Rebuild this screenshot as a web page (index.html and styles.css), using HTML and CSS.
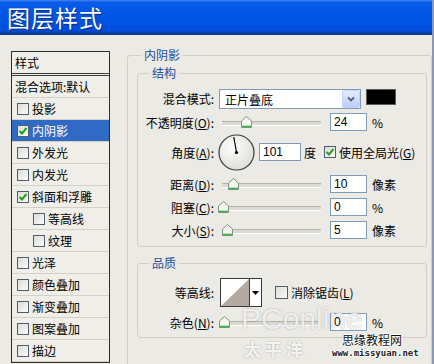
FILE: index.html
```html
<!DOCTYPE html>
<html lang="zh-CN">
<head>
    <meta charset="UTF-8">
    <meta name="viewport" content="width=device-width, initial-scale=1.0">
    <title>图层样式</title>
    <link rel="stylesheet" href="styles.css">
</head>
<body>
    <div class="window">
        <div class="titlebar">图层样式</div>

        <div class="content">
            <!-- Style list on the left -->
            <ul class="styles-list">
                <li class="head">样式</li>
                <li class="plain">混合选项:默认</li>
                <li><span class="cb"></span>投影</li>
                <li class="selected"><span class="cb"><svg viewBox="0 0 10 10"><path d="M1.5 5 L4 7.5 L8.5 2" /></svg></span>内阴影</li>
                <li><span class="cb"></span>外发光</li>
                <li><span class="cb"></span>内发光</li>
                <li><span class="cb"><svg viewBox="0 0 10 10"><path d="M1.5 5 L4 7.5 L8.5 2" /></svg></span>斜面和浮雕</li>
                <li class="sub"><span class="cb"></span>等高线</li>
                <li class="sub"><span class="cb"></span>纹理</li>
                <li><span class="cb"></span>光泽</li>
                <li><span class="cb"></span>颜色叠加</li>
                <li><span class="cb"></span>渐变叠加</li>
                <li><span class="cb"></span>图案叠加</li>
                <li><span class="cb"></span>描边</li>
            </ul>

            <!-- Settings panel -->
            <div class="panel">
                <fieldset class="group outer">
                    <legend>内阴影</legend>

                    <fieldset class="group structure">
                        <legend>结构</legend>

                        <div class="row row-blend">
                            <span class="label">混合模式:</span>
                            <div class="select">
                                <span class="select-text">正片叠底</span>
                                <span class="select-btn"><svg viewBox="0 0 10 8"><path d="M2 2.5 L5 5.5 L8 2.5" /></svg></span>
                            </div>
                            <span class="color-swatch"></span>
                        </div>

                        <div class="row row-opacity">
                            <span class="label">不透明度(<u>O</u>):</span>
                            <div class="slider"><span class="thumb" style="left: 19px"><svg viewBox="0 0 11 12"><polygon points="5.5,0.5 10.5,5 10.5,11.5 0.5,11.5 0.5,5" /><line x1="1" y1="10.5" x2="10" y2="10.5" /></svg></span></div>
                            <input class="num" type="text" value="24" readonly>
                            <span class="unit">%</span>
                        </div>

                        <div class="row row-angle">
                            <span class="label">角度(<u>A</u>):</span>
                            <svg class="dial" viewBox="0 0 37 37">
                                <defs>
                                    <radialGradient id="dialFill" cx="40%" cy="35%" r="70%">
                                        <stop offset="0" stop-color="#ffffff" />
                                        <stop offset="1" stop-color="#dcdcd6" />
                                    </radialGradient>
                                </defs>
                                <circle cx="18.5" cy="18.5" r="17.5" fill="url(#dialFill)" stroke="#3a3a3a" stroke-width="1.2" />
                                <line x1="18.5" y1="18.5" x2="15.8" y2="3" stroke="#000" stroke-width="1.2" />
                                <circle cx="18.5" cy="18.5" r="1.6" fill="#000" />
                            </svg>
                            <input class="num num-angle" type="text" value="101" readonly>
                            <span class="unit">度</span>
                            <span class="cb cb-global"><svg viewBox="0 0 10 10"><path d="M1.5 5 L4 7.5 L8.5 2" /></svg></span>
                            <span class="check-text">使用全局光(<u>G</u>)</span>
                        </div>

                        <div class="row row-slider">
                            <span class="label">距离(<u>D</u>):</span>
                            <div class="slider"><span class="thumb" style="left: 6px"><svg viewBox="0 0 11 12"><polygon points="5.5,0.5 10.5,5 10.5,11.5 0.5,11.5 0.5,5" /><line x1="1" y1="10.5" x2="10" y2="10.5" /></svg></span></div>
                            <input class="num" type="text" value="10" readonly>
                            <span class="unit">像素</span>
                        </div>

                        <div class="row row-slider">
                            <span class="label">阻塞(<u>C</u>):</span>
                            <div class="slider"><span class="thumb" style="left: -4px"><svg viewBox="0 0 11 12"><polygon points="5.5,0.5 10.5,5 10.5,11.5 0.5,11.5 0.5,5" /><line x1="1" y1="10.5" x2="10" y2="10.5" /></svg></span></div>
                            <input class="num" type="text" value="0" readonly>
                            <span class="unit">%</span>
                        </div>

                        <div class="row row-slider">
                            <span class="label">大小(<u>S</u>):</span>
                            <div class="slider"><span class="thumb" style="left: 0px"><svg viewBox="0 0 11 12"><polygon points="5.5,0.5 10.5,5 10.5,11.5 0.5,11.5 0.5,5" /><line x1="1" y1="10.5" x2="10" y2="10.5" /></svg></span></div>
                            <input class="num" type="text" value="5" readonly>
                            <span class="unit">像素</span>
                        </div>
                    </fieldset>

                    <fieldset class="group quality">
                        <legend>品质</legend>

                        <div class="row row-contour">
                            <span class="label">等高线:</span>
                            <div class="contour">
                                <svg class="contour-curve" viewBox="0 0 28 27"><rect width="28" height="27" fill="#fff" /><polygon points="0,27 28,0 28,27" fill="#b3aba0" /></svg>
                                <span class="contour-btn"><svg viewBox="0 0 7 4"><polygon points="0,0 7,0 3.5,4" /></svg></span>
                            </div>
                            <span class="cb cb-smooth"></span>
                            <span class="check-text">消除锯齿(<u>L</u>)</span>
                        </div>

                        <div class="row row-noise">
                            <span class="label">杂色(<u>N</u>):</span>
                            <div class="slider"><span class="thumb" style="left: -3px"><svg viewBox="0 0 11 12"><polygon points="5.5,0.5 10.5,5 10.5,11.5 0.5,11.5 0.5,5" /><line x1="1" y1="10.5" x2="10" y2="10.5" /></svg></span></div>
                            <input class="num" type="text" value="0" readonly>
                            <span class="unit">%</span>
                        </div>
                    </fieldset>
                </fieldset>
            </div>
        </div>

        <!-- Watermark stamped over the screenshot -->
        <div class="watermark">
            <span class="wm-pc">PConline</span>
            <span class="wm-tpy">太 平 洋</span>
            <span class="wm-site">思缘教程网</span>
            <span class="wm-url">www.missyuan.net</span>
        </div>
    </div>
</body>
</html>
```

FILE: styles.css
```css
* {
    box-sizing: border-box;
}
body {
    margin: 0;
    width: 434px;
    height: 364px;
    overflow: hidden;
    background-color: #ebeae4;
    font-family: "Noto Sans CJK SC", sans-serif;
    font-size: 12px;
    color: #000;
}
.window {
    position: relative;
    height: 364px;
    overflow: hidden;
    border-right: 2px solid #8c98b4;
}
.titlebar {
    height: 35px;
    padding: 1px 0 0 7px;
    background: linear-gradient(#4a86f0 0, #0a5ce9 2px, #0055e6 45%, #004fdc 88%, #0a3c9c 94%, #0a3c9c 100%);
    color: #fff;
    font-size: 23px;
    line-height: 33px;
    letter-spacing: 1px;
    text-shadow: 1px 1px 1px #0a2a7a;
}
.content {
    display: flex;
    align-items: flex-start;
    height: 329px;
    overflow: hidden;
    border-top: 1px solid #e4ebf6;
}

/* style list */
.styles-list {
    list-style: none;
    margin: 15px 0 0 11px;
    padding: 0;
    width: 100px;
    border: 1px solid #2e2e2e;
    background-color: #efeee9;
}
.styles-list li {
    display: flex;
    align-items: center;
    height: 22px;
    padding-left: 5px;
    border-bottom: 1px solid #d3d0c6;
    white-space: nowrap;
}
.styles-list .head {
    height: 24px;
    padding-left: 3px;
    border-bottom: 3px double #3c3c3c;
}
.styles-list .plain {
    padding-left: 3px;
}
.styles-list .sub {
    padding-left: 21px;
}
.styles-list .selected {
    background-color: #316ac5;
    color: #fff;
}
.cb {
    display: inline-flex;
    flex: none;
    width: 12px;
    height: 12px;
    margin-right: 3px;
    border: 1px solid #4e5e70;
    background: linear-gradient(135deg, #dcdcd4, #fbfbf9);
}
.cb svg {
    width: 10px;
    height: 10px;
}
.cb path {
    fill: none;
    stroke: #21a121;
    stroke-width: 2;
}

/* right panel */
.panel {
    margin: 12px 0 0 17px;
}
.group {
    margin: 0;
    border: 1px solid #d0cfc2;
    border-radius: 3px;
    min-width: 0;
}
.group legend {
    padding: 0 3px;
    margin-left: 4px;
    color: #1d4f9e;
    font-size: 12px;
    line-height: 14px;
}
.outer {
    width: 305px;
    height: 330px;
    padding: 0 0 0 9px;
}
.structure {
    width: 290px;
    margin-top: 4px;
    padding: 0 0 7px 0;
}
.quality {
    width: 290px;
    margin-top: 9px;
    padding: 0 0 6px 0;
}
.structure legend,
.quality legend {
    margin-left: 11px;
}
.row {
    display: flex;
    align-items: center;
    height: 18px;
    white-space: nowrap;
}
.label {
    flex: none;
    width: 76px;
    margin-right: 5px;
    text-align: right;
}
u {
    text-decoration: underline;
    text-underline-offset: 1px;
}
.row-blend {
    height: 20px;
    margin-top: 9px;
    align-items: flex-start;
}
.row-blend .label {
    line-height: 20px;
}
.row-opacity {
    margin-top: 4px;
}
.row-angle {
    height: 36px;
    margin-top: 3px;
}
.row-slider {
    margin-top: 5px;
}
.row-contour {
    height: 29px;
    margin-top: 8px;
}
.row-noise {
    margin-top: 6px;
}

/* blend mode select */
.select {
    display: flex;
    align-items: center;
    width: 142px;
    height: 20px;
    border: 1px solid #7f9db9;
    background-color: #fff;
}
.select-text {
    padding-left: 5px;
}
.select-btn {
    display: flex;
    align-items: center;
    justify-content: center;
    width: 18px;
    height: 18px;
    margin-left: auto;
    border: 1px solid #c3d3fd;
    border-radius: 2px;
    background: linear-gradient(#e6eefc, #b9cdf4);
}
.select-btn svg {
    width: 10px;
    height: 8px;
}
.select-btn path {
    fill: none;
    stroke: #4d6185;
    stroke-width: 1.8;
}
.color-swatch {
    width: 30px;
    height: 16px;
    margin-left: 5px;
    border: 1px solid #5a5a5a;
    background-color: #000;
}

/* sliders */
.slider {
    position: relative;
    flex: none;
    width: 99px;
    height: 18px;
    margin-left: 3px;
}
.slider::before {
    content: "";
    position: absolute;
    left: 0;
    right: 0;
    top: 8px;
    height: 3px;
    border-top: 1px solid #b4b3aa;
    border-bottom: 1px solid #fff;
    background-color: #dcdbd3;
}
.thumb {
    position: absolute;
    top: 3px;
    width: 11px;
    height: 12px;
}
.thumb svg {
    display: block;
    width: 11px;
    height: 12px;
}
.thumb polygon {
    fill: #f6f6f2;
    stroke: #7d947d;
    stroke-width: 1;
}
.thumb line {
    stroke: #3fb14a;
    stroke-width: 1.6;
}
.num {
    flex: none;
    width: 37px;
    height: 18px;
    margin: 0 0 0 9px;
    padding: 0 0 0 3px;
    border: 1px solid #7f9db9;
    background-color: #fff;
    font-family: "Liberation Sans", "Noto Sans CJK SC", sans-serif;
    font-size: 12px;
    color: #000;
    outline: none;
}
.unit {
    margin-left: 5px;
}

/* angle */
.dial {
    flex: none;
    width: 37px;
    height: 37px;
    margin-left: -1px;
}
.num-angle {
    width: 42px;
    margin-left: 4px;
}
.row-angle .unit {
    margin-left: 3px;
}
.cb-global {
    margin-left: 8px;
}

/* contour */
.contour {
    display: flex;
    width: 42px;
    height: 29px;
    margin-left: 1px;
    border: 1px solid #3a3a3a;
    background-color: #fff;
}
.contour-curve {
    width: 28px;
    height: 27px;
}
.contour-btn {
    display: flex;
    align-items: center;
    justify-content: center;
    width: 12px;
    border-left: 1px solid #3a3a3a;
}
.contour-btn svg {
    width: 7px;
    height: 4px;
}
.cb-smooth {
    width: 13px;
    height: 13px;
    margin-left: 13px;
}

/* watermark overlay */
.watermark {
    position: absolute;
    left: 0;
    top: 0;
    width: 434px;
    height: 364px;
    pointer-events: none;
}
.watermark span {
    position: absolute;
    white-space: nowrap;
    line-height: 1;
}
.wm-pc {
    left: 241px;
    top: 304px;
    font-family: "Liberation Sans", sans-serif;
    font-size: 30px;
    color: rgba(255, 255, 255, 0.8);
    text-shadow: 0 0 2px rgba(110, 110, 110, 0.55);
}
.wm-tpy {
    left: 244px;
    top: 340px;
    font-size: 17px;
    font-weight: bold;
    color: rgba(255, 255, 255, 0.85);
    text-shadow: 0 0 2px rgba(110, 110, 110, 0.5);
}
.wm-site {
    left: 342px;
    top: 334px;
    font-size: 12px;
    color: #111;
    text-shadow: 1px 0 #fff, -1px 0 #fff, 0 1px #fff, 0 -1px #fff;
}
.wm-url {
    left: 332px;
    top: 349px;
    font-family: "DejaVu Sans Mono", monospace;
    font-size: 9px;
    font-weight: bold;
    color: #222;
    text-shadow: 1px 0 #fff, -1px 0 #fff, 0 1px #fff, 0 -1px #fff;
}
```
